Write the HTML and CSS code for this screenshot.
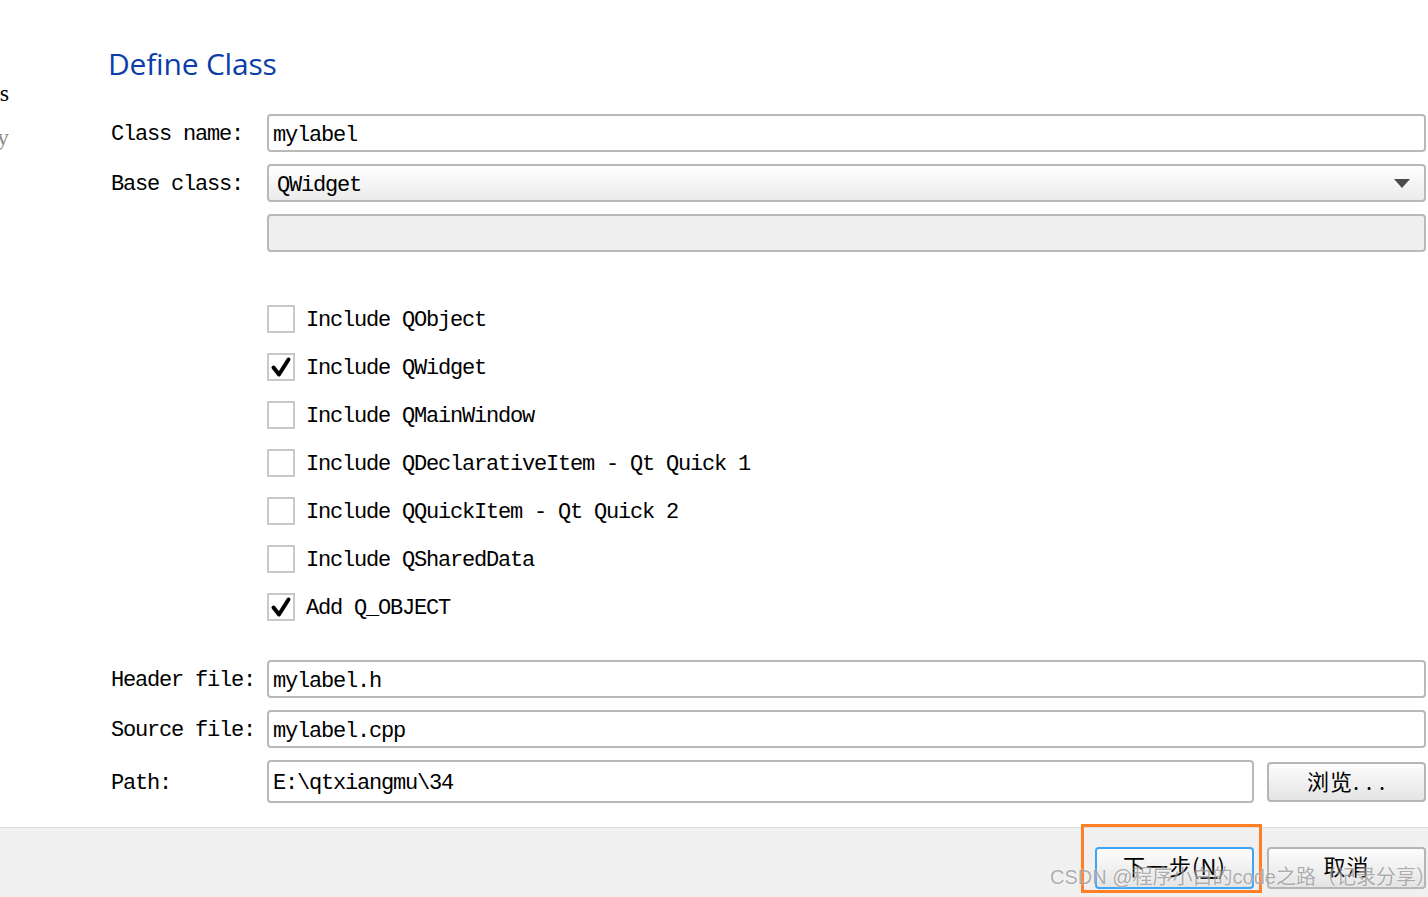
FILE: index.html
```html
<!DOCTYPE html>
<html lang="en">
<head>
    <meta charset="UTF-8">
    <title>Define Class</title>
    <link rel="stylesheet" href="styles.css">
</head>
<body>

<div class="wizard">
    <!-- Wizard steps (cut off at the left edge) -->
    <div class="side">
        <div class="step current"><span>Details</span></div>
        <div class="step"><span>Summary</span></div>
    </div>

    <div class="main">
        <h1 class="title">Define Class</h1>

        <div class="form">
            <label class="lbl">Class name:</label>
            <input class="field" type="text" value="mylabel" readonly>

            <label class="lbl">Base class:</label>
            <div class="field combo">
                <span>QWidget</span>
                <svg class="arrow" width="16" height="9" viewBox="0 0 16 9"><path d="M0 0 L16 0 L8 9 Z" fill="#4a4a4a"/></svg>
            </div>

            <span></span>
            <input class="field disabled" type="text" value="" readonly>
        </div>

        <div class="checks">
            <div class="check"><span class="box"></span>Include QObject</div>
            <div class="check"><span class="box on"><svg width="24" height="24" viewBox="0 0 24 24"><path d="M4.5 12.5 L10 19.5 L19.5 4.5" fill="none" stroke="#000" stroke-width="4" stroke-linecap="round" stroke-linejoin="round"/></svg></span>Include QWidget</div>
            <div class="check"><span class="box"></span>Include QMainWindow</div>
            <div class="check"><span class="box"></span>Include QDeclarativeItem - Qt Quick 1</div>
            <div class="check"><span class="box"></span>Include QQuickItem - Qt Quick 2</div>
            <div class="check"><span class="box"></span>Include QSharedData</div>
            <div class="check"><span class="box on"><svg width="24" height="24" viewBox="0 0 24 24"><path d="M4.5 12.5 L10 19.5 L19.5 4.5" fill="none" stroke="#000" stroke-width="4" stroke-linecap="round" stroke-linejoin="round"/></svg></span>Add Q_OBJECT</div>
        </div>

        <div class="form files">
            <label class="lbl">Header file:</label>
            <input class="field" type="text" value="mylabel.h" readonly>

            <label class="lbl">Source file:</label>
            <input class="field" type="text" value="mylabel.cpp" readonly>

            <label class="lbl">Path:</label>
            <div class="path-row">
                <input class="field path" type="text" value="E:\qtxiangmu\34" readonly>
                <button class="btn browse">浏览. . .</button>
            </div>
        </div>
    </div>
</div>

<div class="footer">
    <div class="next-wrap">
        <button class="btn next">下一步(<u>N</u>)</button>
        <span class="highlight"></span>
    </div>
    <button class="btn">取消</button>
    <span class="watermark">CSDN @程序小白的code之路（记录分享）</span>
</div>

</body>
</html>
```

FILE: styles.css
```css
body {
    margin: 0;
    width: 1428px;
    height: 897px;
    overflow: hidden;
    background-color: #ffffff;
    font-family: "Liberation Mono", "Noto Sans CJK SC", monospace;
    font-size: 22px;
    letter-spacing: -1.2px;
    color: #000;
}

.wizard {
    display: flex;
    height: 827px;
}

/* Step list on the left, only the tail is visible */
.side {
    width: 9px;
    overflow: hidden;
    padding-top: 78px;
    display: flex;
    flex-direction: column;
    gap: 14px;
}

.step {
    display: flex;
    justify-content: flex-end;
    white-space: nowrap;
    line-height: 30px;
    font-family: "Liberation Serif", serif;
    font-size: 24px;
    letter-spacing: 0;
    color: #8a8a8a;
}

.step.current {
    color: #000;
}

.main {
    flex: 1;
    padding-left: 99px;
    padding-right: 2px;
}

.title {
    margin: 0;
    padding-top: 42px;
    line-height: 44px;
    font-family: "Open Sans", sans-serif;
    font-weight: normal;
    font-size: 30px;
    letter-spacing: -0.2px;
    color: #0b3ea8;
}

.form {
    display: grid;
    grid-template-columns: 159px 1fr;
    row-gap: 12px;
    align-items: center;
    margin-top: 28px;
}

.lbl {
    padding-left: 3px;
    padding-top: 4px;
    line-height: 34px;
}

.field {
    box-sizing: border-box;
    height: 38px;
    width: 100%;
    margin: 0;
    padding: 4px 4px 0;
    border: 2px solid #b9b9b9;
    border-radius: 4px;
    background-color: #fff;
    font: inherit;
    letter-spacing: inherit;
    color: #000;
    outline: none;
}

.combo {
    display: flex;
    align-items: center;
    justify-content: space-between;
    padding-left: 8px;
    padding-right: 14px;
    background: linear-gradient(#ffffff, #ebebeb);
}

.arrow {
    margin-top: -3px;
}

.disabled {
    background-color: #efefef;
}

/* Checkboxes */
.checks {
    margin-top: 53px;
    margin-left: 159px;
    display: flex;
    flex-direction: column;
    gap: 20px;
}

.check {
    box-sizing: border-box;
    display: flex;
    align-items: center;
    gap: 11px;
    height: 28px;
    padding-top: 3px;
}

.box {
    box-sizing: border-box;
    width: 28px;
    height: 28px;
    margin-top: -3px;
    border: 2px solid #c9c9c9;
    background-color: #fff;
    display: flex;
    align-items: center;
    justify-content: center;
}

.files {
    margin-top: 39px;
}

.path-row {
    display: flex;
    align-items: center;
    gap: 13px;
}

.path {
    flex: 1;
    height: 43px;
}

.btn {
    box-sizing: border-box;
    width: 159px;
    height: 40px;
    padding: 0 0 3px;
    border: 2px solid #b5b5b5;
    border-radius: 4px;
    background: linear-gradient(#fdfdfd, #e4e4e4);
    font-family: "Noto Sans CJK SC", sans-serif;
    font-size: 22px;
    line-height: 30px;
    letter-spacing: 1px;
    color: #000;
}

/* Bottom button bar */
.footer {
    position: relative;
    box-sizing: border-box;
    height: 70px;
    border-top: 1px solid #dcdcdc;
    background-color: #f0f0f0;
    display: flex;
    align-items: flex-start;
    justify-content: flex-end;
    gap: 13px;
    padding-top: 19px;
    padding-right: 2px;
}

.footer .btn {
    height: 42px;
    padding-bottom: 6px;
}

.next-wrap {
    position: relative;
    display: flex;
}

.next {
    border-color: #3fa4f2;
}

.highlight {
    position: absolute;
    top: -23px;
    left: -14px;
    right: -8px;
    bottom: -4px;
    border: 3px solid #ff7f27;
}

.watermark {
    position: absolute;
    left: 1050px;
    top: 33px;
    font-family: "Liberation Sans", "Noto Sans CJK SC", sans-serif;
    font-size: 20px;
    letter-spacing: 0;
    color: rgba(110, 110, 110, 0.55);
    text-shadow: 0 0 2px rgba(255, 255, 255, 0.8);
    white-space: nowrap;
}
```
